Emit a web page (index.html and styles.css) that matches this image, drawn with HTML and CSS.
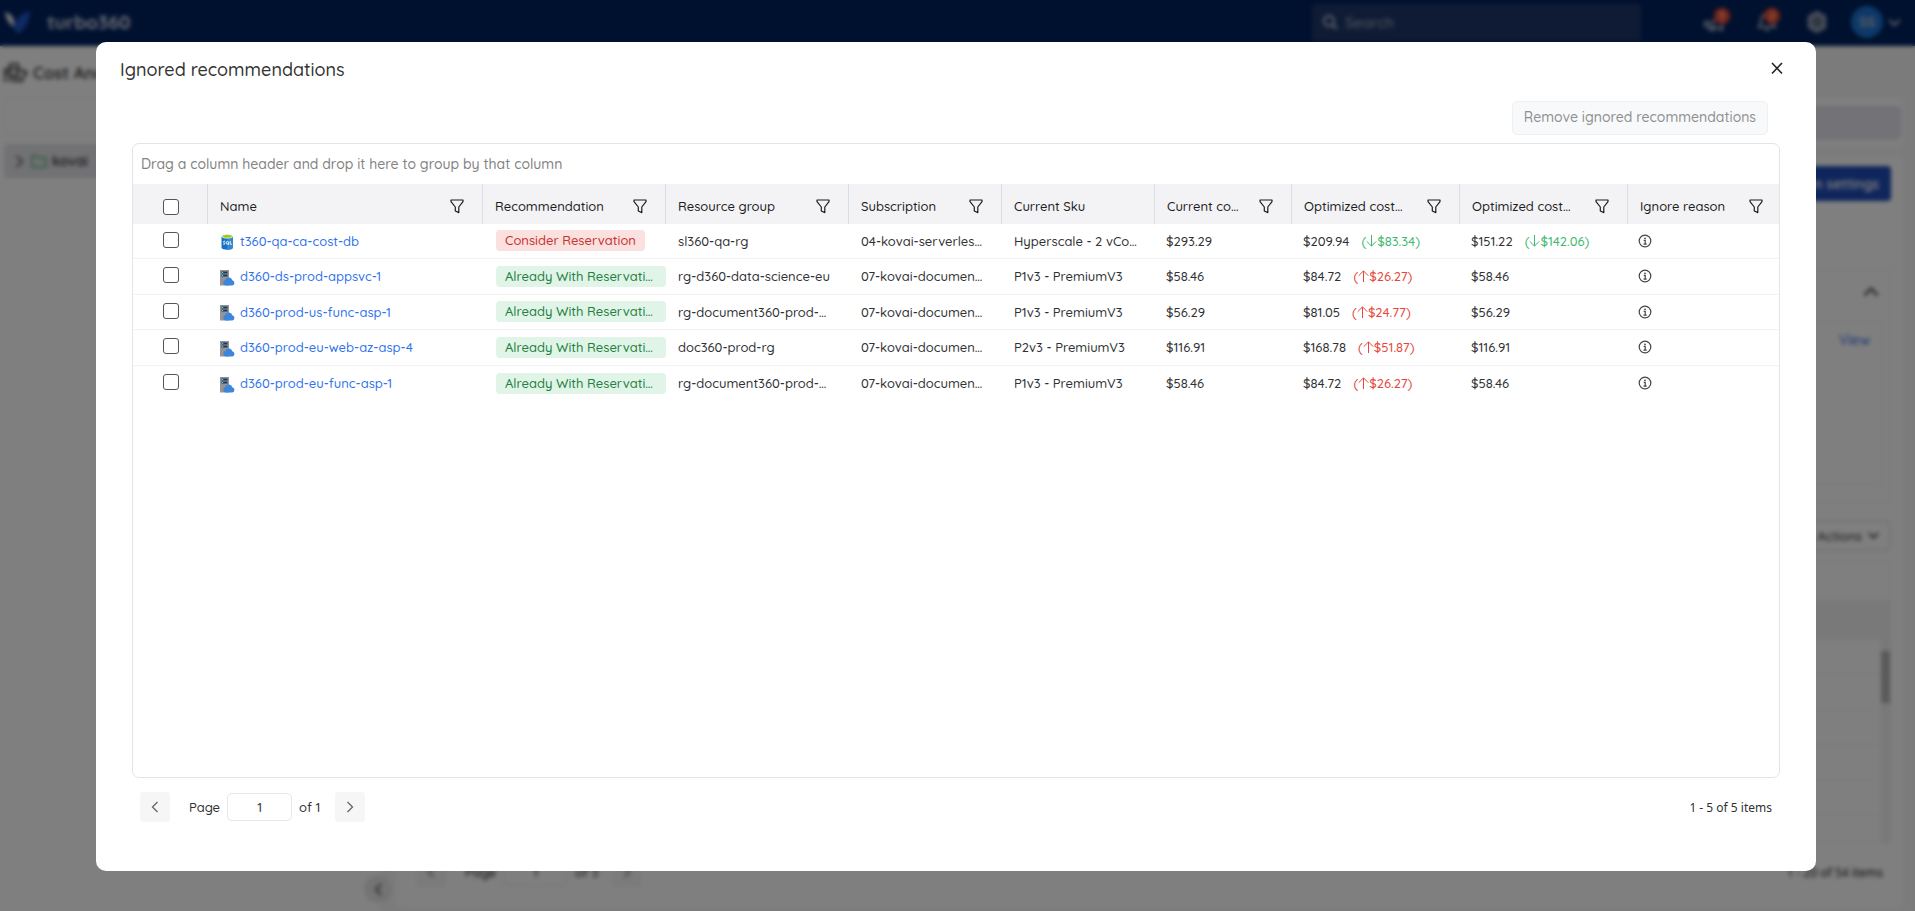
FILE: index.html
```html
<!DOCTYPE html>
<html lang="en">
<head>
<meta charset="utf-8">
<title>Ignored recommendations</title>
<link rel="stylesheet" href="styles.css">
</head>
<body>
<svg class="defs" aria-hidden="true">
  <symbol id="filter" viewBox="0 0 14 15"><path d="M1 1h12v1.600L8.800 8v5.600L5.300 12V8L1 2.600z" fill="none" stroke="currentColor" stroke-width="1.200" stroke-linejoin="round"/></symbol>
  <symbol id="info" viewBox="0 0 14 14"><circle cx="7" cy="7" r="5.800" fill="none" stroke="currentColor" stroke-width="1.200"/><circle cx="7" cy="4.300" r=".9" fill="currentColor"/><path d="M5.700 6.300H7.200V10M5.500 10.100h3.200" fill="none" stroke="currentColor" stroke-width="1.200"/></symbol>
  <symbol id="left" viewBox="0 0 12 12"><path d="M8.500 1 3.500 6l5 5" fill="none" stroke="currentColor" stroke-width="1.300"/></symbol>
  <symbol id="right" viewBox="0 0 12 12"><path d="m3.500 1 5 5-5 5" fill="none" stroke="currentColor" stroke-width="1.300"/></symbol>
  <symbol id="down" viewBox="0 0 12 12"><path d="m1 3.500 5 5 5-5" fill="none" stroke="currentColor" stroke-width="2"/></symbol>
  <symbol id="up" viewBox="0 0 12 12"><path d="m1 8.500 5-5 5 5" fill="none" stroke="currentColor" stroke-width="2"/></symbol>
  <symbol id="arrow-down" viewBox="0 0 11 12"><path d="M5.500 0v11M.7 6.300l4.800 4.800 4.800-4.800" fill="none" stroke="currentColor"/></symbol>
  <symbol id="arrow-up" viewBox="0 0 11 12"><path d="M5.500 12V1M.7 5.700l4.800-4.800 4.800 4.800" fill="none" stroke="currentColor"/></symbol>
  <symbol id="plan" viewBox="0 0 15 16"><path d="M0 0h9v15.500H0z" fill="#949494"/><path d="M1.500 1.500h6v2h-6zM1.500 4.500h6v2h-6z" fill="#173a63"/><path d="M2 2h1.200v1H2zM2 5h1.200v1H2z" fill="#4fd3f5"/><path d="M5.800 15.500a2.900 2.900 0 0 1-.3-5.700 3.600 3.600 0 0 1 6.800.4 2.700 2.700 0 0 1-.1 5.300z" fill="#3b86dc"/></symbol>
  <symbol id="sql" viewBox="0 0 15 16"><path d="M1.500 2.500v11c0 1.300 2.500 2.300 5.700 2.300s5.700-1 5.700-2.300v-11z" fill="#1b72c4"/><path d="M7.200 4.500v11.300c3.200 0 5.700-1 5.700-2.300v-11z" fill="#3487d4"/><ellipse cx="7.200" cy="2.400" rx="5.700" ry="2.200" fill="#e9f3d6"/><ellipse cx="7.200" cy="2.300" rx="4.600" ry="1.500" fill="#9bcb1e"/><g fill="none" stroke="#fff" stroke-width=".9"><path d="M5.200 7.300c-1.900-.6-2.300 1-1 1.500s.9 2-1 1.300"/><circle cx="7.400" cy="8.800" r="1.300"/><path d="m7.700 9.600 1.300 1.300M10.200 7v3.200h1.700"/></g></symbol>
</svg>

<div class="page">
  <header class="topbar">
    <svg class="logo" viewBox="0 0 26 23"><path d="M0 1c4 1 9 4 9 10v5C4 13 1 8 0 1z" fill="#e8edf7"/><path d="M25 0c-1 11-4 18-13 23l-3-7c2-9 7-13 16-16z" fill="#1f55c9"/></svg>
    <strong class="brand">turbo360</strong>
    <label class="search"><svg width="16" height="16" viewBox="0 0 16 16"><circle cx="7" cy="7" r="5" fill="none" stroke="#cfd6e6" stroke-width="2"/><path d="m11 11 4 4" stroke="#cfd6e6" stroke-width="2"/></svg><input type="text" placeholder="Search" aria-label="Search"></label>
    <button class="top-icon" aria-label="Announcements"><svg width="24" height="20" viewBox="0 0 24 20"><path d="M2 10h8l9-4v12l-9-4H2zM5 14l2 4h4l-1-4" fill="none" stroke="#b5bccb" stroke-width="2"/></svg><span class="badge">5</span></button>
    <button class="top-icon" aria-label="Notifications"><svg width="20" height="20" viewBox="0 0 20 20"><path d="M2 15c2-2 2-4 2-7a6 6 0 0 1 12 0c0 3 0 5 2 7zM8 18h4" fill="none" stroke="#b5bccb" stroke-width="2"/></svg><span class="badge">2</span></button>
    <button class="top-icon gear" aria-label="Settings"><svg width="20" height="22" viewBox="0 0 20 22"><path d="m10 1 8 4.500v11L10 21l-8-4.500v-11z" fill="#8490a8" stroke="#aab3c6" stroke-width="2"/><circle cx="10" cy="11" r="3.500" fill="none" stroke="#3c4a68" stroke-width="2"/></svg></button>
    <button class="account" aria-label="Account"><span class="avatar">SS</span><svg width="13" height="13"><use href="#down"/></svg></button>
  </header>
  <div class="shell">
    <aside class="sidebar">
      <h1 class="side-title"><svg width="24" height="22" viewBox="0 0 24 22"><path d="M1 21V8h5v13M6 21V3h8v10M6 8h8M10 21v-6M2 12h4M6 15h7" fill="none" stroke="#444" stroke-width="2"/><circle cx="17" cy="13" r="4" fill="none" stroke="#444" stroke-width="2"/><path d="M10 20h10M21 9l2 5" stroke="#444" stroke-width="2"/></svg>Cost Analysis</h1>
      <input class="side-input" type="text" aria-label="Filter groups">
      <button class="tree-row"><svg width="13" height="13"><use href="#right"/></svg><svg width="16" height="14" viewBox="0 0 16 14"><path d="M1 2h5l2 2h7v9H1z" fill="none" stroke="#4fb06d" stroke-width="1.500"/></svg>kovai</button>
      <button class="collapse" aria-label="Collapse"><svg width="13" height="13"><use href="#left"/></svg></button>
    </aside>
    <main class="main">
      <div class="strip"><div class="strip-fill"></div></div>
      <section class="card">
        <button class="primary">Optimization settings</button>
        <div class="summary"><svg width="16" height="16"><use href="#up"/></svg><div class="summary-box"><a href="#view">View</a></div></div>
        <button class="actions">Actions <svg width="11" height="11"><use href="#down"/></svg></button>
        <div class="back-grid"><div class="band"></div><div class="back-rows"><div class="lines"><i></i><i></i><i></i><i></i><i></i></div><div class="track"><div class="thumb"></div></div></div></div>
        <div class="pager back-pager">
          <button class="step" aria-label="Previous"><svg width="12" height="12"><use href="#left"/></svg></button>
          <label class="page-label">Page <input type="text" value="1"></label><span>of 3</span>
          <button class="step" aria-label="Next"><svg width="12" height="12"><use href="#right"/></svg></button>
          <span class="count">1 - 20 of 54 items</span>
        </div>
      </section>
    </main>
  </div>
</div>

<div class="overlay">
  <div class="modal" role="dialog" aria-modal="true" aria-labelledby="title">
    <div class="modal-head">
      <h2 id="title">Ignored recommendations</h2>
      <button class="close" aria-label="Close"><svg width="12" height="14" viewBox="0 0 12 14"><path d="m1 2 10 10.500M11 2 1 12.500" stroke="currentColor" stroke-width="1.600"/></svg></button>
    </div>
    <div class="toolbar"><button class="remove" disabled>Remove ignored recommendations</button></div>
    <div class="grid">
      <div class="group-hint">Drag a column header and drop it here to group by that column</div>
      <table>
        <colgroup><col class="c-check"><col class="c-name"><col class="c-rec"><col class="c-rec"><col class="c-sub"><col class="c-sub"><col class="c-cost"><col class="c-opt"><col class="c-opt"><col class="c-sub"></colgroup>
        <thead>
          <tr>
            <th class="check"><input type="checkbox" aria-label="Select all"></th>
            <th><div class="th">Name<button aria-label="Filter name"><svg><use href="#filter"/></svg></button></div></th>
            <th><div class="th">Recommendation<button aria-label="Filter recommendation"><svg><use href="#filter"/></svg></button></div></th>
            <th><div class="th">Resource group<button aria-label="Filter resource group"><svg><use href="#filter"/></svg></button></div></th>
            <th><div class="th">Subscription<button aria-label="Filter subscription"><svg><use href="#filter"/></svg></button></div></th>
            <th><div class="th">Current Sku</div></th>
            <th><div class="th">Current co…<button aria-label="Filter current cost"><svg><use href="#filter"/></svg></button></div></th>
            <th><div class="th">Optimized cost…<button aria-label="Filter optimized cost"><svg><use href="#filter"/></svg></button></div></th>
            <th><div class="th">Optimized cost…<button aria-label="Filter optimized cost"><svg><use href="#filter"/></svg></button></div></th>
            <th><div class="th">Ignore reason<button aria-label="Filter ignore reason"><svg><use href="#filter"/></svg></button></div></th>
          </tr>
        </thead>
        <tbody>
          <tr>
            <td class="check"><input type="checkbox" aria-label="Select t360-qa-ca-cost-db"></td>
            <td><a class="res" href="#r1"><svg><use href="#sql"/></svg>t360-qa-ca-cost-db</a></td>
            <td><span class="tag red">Consider Reservation</span></td>
            <td>sl360-qa-rg</td><td>04-kovai-serverles…</td><td>Hyperscale - 2 vCo…</td><td class="num">$293.29</td>
            <td class="num">$209.94<span class="delta down">(<svg><use href="#arrow-down"/></svg>$83.34)</span></td>
            <td class="num">$151.22<span class="delta down">(<svg><use href="#arrow-down"/></svg>$142.06)</span></td>
            <td class="why"><button class="info" aria-label="Reason"><svg><use href="#info"/></svg></button></td>
          </tr>
          <tr>
            <td class="check"><input type="checkbox" aria-label="Select d360-ds-prod-appsvc-1"></td>
            <td><a class="res" href="#r2"><svg><use href="#plan"/></svg>d360-ds-prod-appsvc-1</a></td>
            <td><span class="tag green">Already With Reservati…</span></td>
            <td>rg-d360-data-science-eu</td><td>07-kovai-documen…</td><td>P1v3 - PremiumV3</td><td class="num">$58.46</td>
            <td class="num">$84.72<span class="delta up">(<svg><use href="#arrow-up"/></svg>$26.27)</span></td>
            <td class="num">$58.46</td>
            <td class="why"><button class="info" aria-label="Reason"><svg><use href="#info"/></svg></button></td>
          </tr>
          <tr>
            <td class="check"><input type="checkbox" aria-label="Select d360-prod-us-func-asp-1"></td>
            <td><a class="res" href="#r3"><svg><use href="#plan"/></svg>d360-prod-us-func-asp-1</a></td>
            <td><span class="tag green">Already With Reservati…</span></td>
            <td>rg-document360-prod-…</td><td>07-kovai-documen…</td><td>P1v3 - PremiumV3</td><td class="num">$56.29</td>
            <td class="num">$81.05<span class="delta up">(<svg><use href="#arrow-up"/></svg>$24.77)</span></td>
            <td class="num">$56.29</td>
            <td class="why"><button class="info" aria-label="Reason"><svg><use href="#info"/></svg></button></td>
          </tr>
          <tr>
            <td class="check"><input type="checkbox" aria-label="Select d360-prod-eu-web-az-asp-4"></td>
            <td><a class="res" href="#r4"><svg><use href="#plan"/></svg>d360-prod-eu-web-az-asp-4</a></td>
            <td><span class="tag green">Already With Reservati…</span></td>
            <td>doc360-prod-rg</td><td>07-kovai-documen…</td><td>P2v3 - PremiumV3</td><td class="num">$116.91</td>
            <td class="num">$168.78<span class="delta up">(<svg><use href="#arrow-up"/></svg>$51.87)</span></td>
            <td class="num">$116.91</td>
            <td class="why"><button class="info" aria-label="Reason"><svg><use href="#info"/></svg></button></td>
          </tr>
          <tr>
            <td class="check"><input type="checkbox" aria-label="Select d360-prod-eu-func-asp-1"></td>
            <td><a class="res" href="#r5"><svg><use href="#plan"/></svg>d360-prod-eu-func-asp-1</a></td>
            <td><span class="tag green">Already With Reservati…</span></td>
            <td>rg-document360-prod-…</td><td>07-kovai-documen…</td><td>P1v3 - PremiumV3</td><td class="num">$58.46</td>
            <td class="num">$84.72<span class="delta up">(<svg><use href="#arrow-up"/></svg>$26.27)</span></td>
            <td class="num">$58.46</td>
            <td class="why"><button class="info" aria-label="Reason"><svg><use href="#info"/></svg></button></td>
          </tr>
        </tbody>
      </table>
    </div>
    <div class="pager">
      <button class="step" aria-label="Previous page"><svg width="12" height="12"><use href="#left"/></svg></button>
      <label class="page-label">Page <input type="text" value="1"></label><span>of 1</span>
      <button class="step" aria-label="Next page"><svg width="12" height="12"><use href="#right"/></svg></button>
      <span class="count">1 - 5 of 5 items</span>
    </div>
  </div>
</div>
</body>
</html>
```
FILE: styles.css
```css
* { box-sizing: border-box; }
body { margin: 0; height: 100vh; overflow: hidden; font-family: Quicksand, Inter, "Noto Sans", sans-serif; font-size: 13px; font-weight: 500; color: #303134; }
button, input { font: inherit; color: inherit; }
button { border: 0; padding: 0; background: none; }
h1, h2 { margin: 0; }
svg { display: block; flex: none; }
.defs { position: absolute; width: 0; height: 0; }

/* page behind the dialog */
.page { height: 100vh; display: flex; flex-direction: column; background: #fff; }
.topbar { height: 46px; flex: none; display: flex; align-items: center; padding: 0 14px 2px 5px; background: #00225f; color: #fff; }
.logo { width: 26px; height: 23px; margin-right: 16px; }
.brand { font-size: 19px; color: #d5dae6; }
.search { display: flex; align-items: center; gap: 5px; width: 329px; height: 37px; margin-left: auto; margin-right: 62px; padding-left: 10px; border-radius: 4px; background: #1e376a; }
.search input { width: 100%; border: 0; background: none; font-size: 15px; }
.search input::placeholder { color: #a5afc5; }
.top-icon { position: relative; margin-right: 30px; }
.gear { margin-right: 24px; }
.badge { position: absolute; top: -4px; right: -3px; width: 16px; height: 16px; border-radius: 8px; background: #f0492f; font-size: 10px; line-height: 16px; }
.account { display: flex; align-items: center; gap: 5px; color: #b5bccb; }
.avatar { width: 32px; height: 32px; border-radius: 16px; background: #1b72d0; font-size: 14px; font-weight: 700; line-height: 32px; }
.shell { flex: 1; min-height: 0; display: flex; background: #f7f7f8; }
.sidebar { width: 380px; flex: none; display: flex; flex-direction: column; align-items: stretch; padding: 14px 0 8px 4px; background: #fff; }
.side-title { display: flex; align-items: center; gap: 5px; height: 24px; font-size: 17px; font-weight: 600; color: #333; }
.side-input { height: 37px; margin-top: 14px; border: 1px solid #eee; border-radius: 4px; }
.tree-row { display: flex; align-items: center; gap: 5px; height: 34px; margin-top: 9px; padding-left: 9px; border-radius: 4px; background: #e4e4ea; font-size: 14px; font-weight: 600; }
.collapse { width: 28px; height: 28px; margin: auto -12px 0 auto; border-radius: 14px; background: #e8e8e8; display: grid; place-items: center; }
.main { flex: 1; display: flex; flex-direction: column; padding: 52px 12px 4px 16px; }
.strip { height: 49px; padding: 8px 2px; border-radius: 6px; background: #fff; }
.strip-fill { height: 34px; border-radius: 5px; background: #e4e4ee; }
.card { flex: 1; display: flex; flex-direction: column; margin-top: 10px; padding: 9px 12px 20px; border-radius: 6px; background: #fff; }
.primary { align-self: flex-end; height: 35px; padding: 0 12px; border-radius: 4px; background: #1f4db8; color: #fff; font-size: 14px; font-weight: 600; }
.summary { display: flex; flex-direction: column; height: 233px; margin-top: 68px; padding: 14px 8px 16px; border: 1px solid #f1f1f1; }
.summary > svg { margin: 0 3px 0 auto; color: #555; }
.summary-box { flex: 1; margin-top: 22px; padding: 8px 11px; border: 1px solid #f1f1f1; text-align: right; }
.summary-box a { color: #2f6fed; font-size: 14px; text-decoration: none; }
.actions { align-self: flex-end; display: flex; align-items: center; gap: 6px; height: 31px; margin-top: 18px; padding: 0 10px; border: 2px solid #e8e8e8; border-radius: 4px; }
.back-grid { flex: 1; display: flex; flex-direction: column; margin-top: 10px; padding-top: 38px; border: 1px solid #f1f1f1; }
.band { height: 40px; background: #f2f2f4; }
.back-rows { flex: 1; display: flex; }
.lines { flex: 1; display: flex; flex-direction: column; }
.lines i { height: 35px; border-bottom: 1px solid #f3f3f3; }
.track { width: 9px; padding-top: 11px; background: #f1f1f1; }
.thumb { height: 52px; background: #b4b4b4; }

/* dialog */
.overlay { position: fixed; inset: 0; display: flex; padding: 42px 99px 40px 96px; background: rgba(0, 0, 0, .5); backdrop-filter: blur(2px); }
.modal { flex: 1; min-width: 0; display: flex; flex-direction: column; padding: 16px 36px 49px; border-radius: 10px; background: #fff; }
.modal-head { display: flex; align-items: center; justify-content: space-between; height: 24px; margin: 0 -4px 0 -12px; }
.modal-head h2 { font-size: 18px; font-weight: 500; line-height: 24px; color: #333; }
.close { color: #222; padding: 0 1px 5px; }
.toolbar { display: flex; justify-content: flex-end; margin: 19px 12px 8px; }
.remove { height: 34px; padding: 0 11px 2px; border: 1px solid #eef0f2; border-radius: 5px; background: #f8f9fb; color: #8f8f8f; font-size: 14px; }
.grid { flex: 1; overflow: hidden; border: 1px solid #e4e4e8; border-radius: 7px; }
.group-hint { height: 40px; padding-left: 8px; font-size: 14px; line-height: 41px; color: #828282; }
table { width: 100%; table-layout: fixed; border-collapse: separate; border-spacing: 0; }
.c-check { width: 75px; }
.c-name { width: 275px; }
.c-rec { width: 183px; }
.c-sub { width: 153px; }
.c-cost { width: 137px; }
.c-opt { width: 168px; }
th { height: 40px; padding: 4px 18px 0 12px; border-right: 1px solid #dcdde3; background: #f3f3f5; font-weight: 500; text-align: left; color: #1c1c1e; white-space: nowrap; }
th:last-child { border-right: 0; }
.th { display: flex; align-items: center; justify-content: space-between; }
.th button svg { width: 14px; height: 15px; }
td { height: 35px; padding: 0 0 1px 12px; border-bottom: 1px solid #f3f3f3; line-height: 20px; white-space: nowrap; }
tr:nth-child(even) td { height: 36px; }
tr:last-child td { border-bottom: 0; }
td.num { padding-left: 11px; }
td.why { padding-left: 10px; }
th.check { padding: 6px 0 0 1px; }
td.check { padding: 0 0 3px; }
.check input { appearance: none; display: block; width: 16px; height: 16px; margin: 0 auto; border: 1px solid #555; border-radius: 3px; background: #fff; }
.res { display: flex; align-items: center; gap: 5px; color: #2f73ee; text-decoration: none; }
.res svg { width: 15px; height: 16px; margin-top: 3px; }
.tag { display: block; width: max-content; max-width: 100%; height: 21px; margin-left: 1px; padding: 0 9px; border-radius: 4px; font-size: 13px; line-height: 21px; }
.red { background: #fae0df; color: #c8302b; }
.green { width: auto; background: #e0f4e7; color: #23803f; }
.delta { display: inline-flex; align-items: center; margin-left: 12px; }
.delta svg { width: 11px; height: 12px; }
.down { color: #3fb871; }
.up { color: #e5473a; }
.info { display: block; color: #444; }
.info svg { width: 14px; height: 14px; }

.pager { display: flex; align-items: center; height: 30px; margin: 14px 8px 0; }
.step { display: grid; place-items: center; width: 30px; height: 30px; border-radius: 3px; background: #f6f6f6; color: #666; }
.page-label { display: flex; align-items: center; gap: 7px; margin: 0 7px 0 19px; }
.page-label input { width: 65px; height: 28px; border: 1px solid #e6e6e6; border-radius: 5px; background: #fff; text-align: center; padding: 0; }
.pager span + .step { margin-left: 14px; }
.count { margin-left: auto; font-family: "Noto Sans", sans-serif; font-size: 12px; font-weight: 400; }
.back-pager { color: #222; }
```
